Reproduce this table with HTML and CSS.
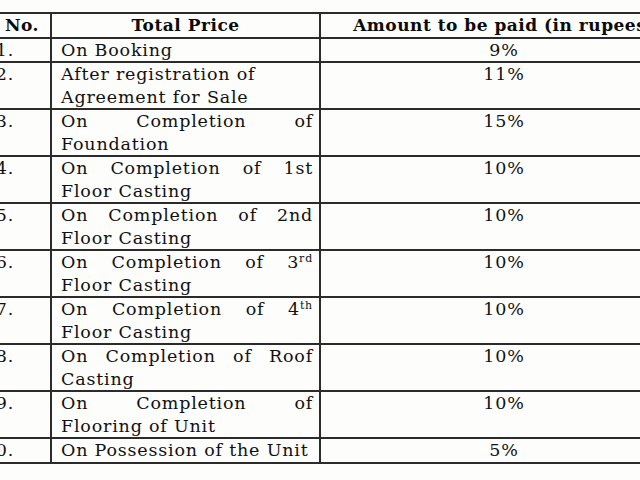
FILE: index.html
```html
<!DOCTYPE html>
<html lang="en">
<head>
<meta charset="utf-8">
<title>Payment Plan</title>
<link rel="stylesheet" href="styles.css">
</head>
<body>
<table class="plan">
  <colgroup>
    <col class="c-no">
    <col class="c-stage">
    <col class="c-amt">
  </colgroup>
  <thead>
    <tr>
      <th class="no">S. No.</th>
      <th class="stage-h">Total Price</th>
      <th class="amt-h">Amount to be paid (in rupees)</th>
    </tr>
  </thead>
  <tbody>
    <tr><td class="no">1.</td><td class="stage">On Booking</td><td class="amt">9%</td></tr>
    <tr><td class="no">2.</td><td class="stage">After registration of<br>Agreement for Sale</td><td class="amt">11%</td></tr>
    <tr><td class="no">3.</td><td class="stage">On Completion of Foundation</td><td class="amt">15%</td></tr>
    <tr><td class="no">4.</td><td class="stage">On Completion of 1st Floor Casting</td><td class="amt">10%</td></tr>
    <tr><td class="no">5.</td><td class="stage">On Completion of 2nd Floor Casting</td><td class="amt">10%</td></tr>
    <tr><td class="no">6.</td><td class="stage">On Completion of 3<sup>rd</sup> Floor Casting</td><td class="amt">10%</td></tr>
    <tr><td class="no">7.</td><td class="stage">On Completion of 4<sup>th</sup> Floor Casting</td><td class="amt">10%</td></tr>
    <tr><td class="no">8.</td><td class="stage">On Completion of Roof Casting</td><td class="amt">10%</td></tr>
    <tr><td class="no">9.</td><td class="stage">On Completion of Flooring of Unit</td><td class="amt">10%</td></tr>
    <tr><td class="no">10.</td><td class="stage">On Possession of the Unit</td><td class="amt">5%</td></tr>
  </tbody>
</table>
</body>
</html>
```
FILE: styles.css
```css
html, body {
  margin: 0;
  padding: 0;
  background: #fdfdfb;
  overflow: hidden;
}
body {
  width: 640px;
  height: 480px;
  font-family: "DejaVu Serif", "Liberation Serif", serif;
  color: #111;
}
.plan {
  border-collapse: collapse;
  table-layout: fixed;
  width: 727px;
  margin: 12px 0 0 -40px;
  font-size: 17.5px;
  line-height: 22.5px;
  letter-spacing: 0.8px;
}
.c-no { width: 90px; }
.c-stage { width: 269px; }
.c-amt { width: 368px; }
.plan th,
.plan td {
  border: 2px solid #2b2b2b;
  padding: 0;
  vertical-align: top;
}
.plan th {
  font-weight: bold;
  font-size: 17px;
  letter-spacing: 0.5px;
  color: #0a0a0a;
}
.plan th.no {
  text-align: right;
  padding-right: 11px;
}
.plan td.no {
  text-align: right;
  padding-right: 36px;
}
.plan .stage-h,
.plan .amt-h {
  text-align: center;
}
.plan .stage {
  text-align: justify;
  padding: 0 6px 0 9px;
}
.stage sup {
  font-size: 11px;
  line-height: 0;
  vertical-align: 6px;
}
.plan .amt {
  text-align: center;
}
```
